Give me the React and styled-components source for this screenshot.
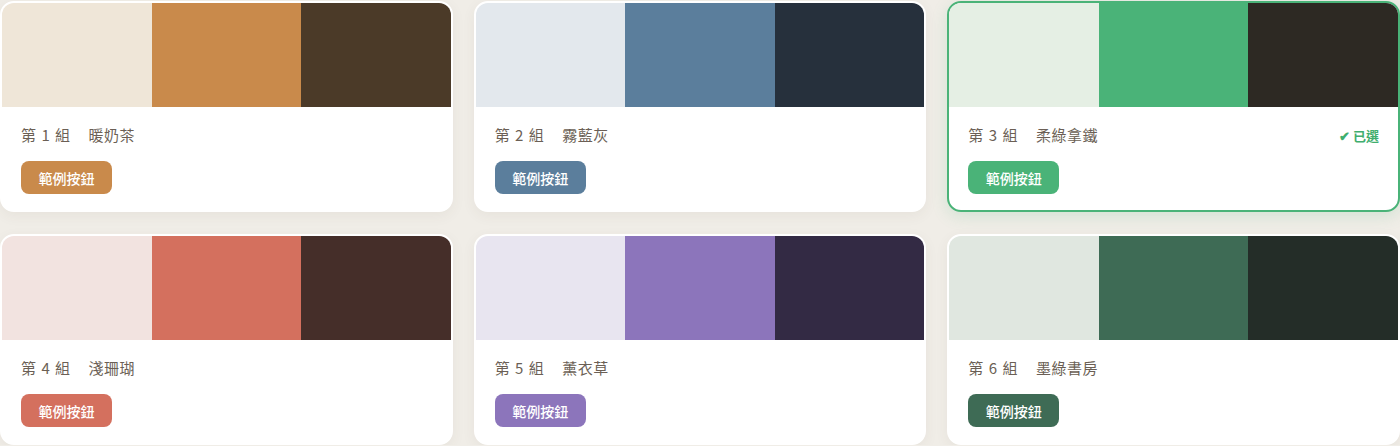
import React from 'react';
import styled, { createGlobalStyle } from 'styled-components';

const GlobalStyle = createGlobalStyle`
  html, body {
    margin: 0;
    padding: 0;
    background: #f0ede7;
  }
  body {
    font-family: "Noto Sans CJK TC", "Noto Sans", sans-serif;
  }
`;

const palettes = [
  { no: 1, name: '暖奶茶', colors: ['#efe6d8', '#c98a4b', '#4b3a28'], accent: '#c98a4b' },
  { no: 2, name: '霧藍灰', colors: ['#e3e8ed', '#5b7e9c', '#26303c'], accent: '#5b7e9c' },
  { no: 3, name: '柔綠拿鐵', colors: ['#e5efe4', '#4ab378', '#2d2923'], accent: '#4ab378', selected: true },
  { no: 4, name: '淺珊瑚', colors: ['#f2e3e0', '#d4705e', '#452e29'], accent: '#d4705e' },
  { no: 5, name: '薰衣草', colors: ['#e8e5f0', '#8c75bb', '#332a44'], accent: '#8c75bb' },
  { no: 6, name: '墨綠書房', colors: ['#e0e7e0', '#3e6b55', '#242d28'], accent: '#3e6b55' },
];

const Grid = styled.div`
  display: grid;
  grid-template-columns: repeat(3, 1fr);
  column-gap: 21px;
  row-gap: 22px;
  width: 1400px;
  padding-top: 1px;
  box-sizing: border-box;
`;

const Card = styled.div`
  background: #fff;
  border: 2px solid ${(p) => (p.$selected ? '#4ab378' : '#ffffff')};
  border-radius: 14px;
  overflow: hidden;
  box-shadow: ${(p) =>
    p.$selected
      ? '0 4px 16px rgba(74, 179, 120, 0.18)'
      : '0 4px 14px rgba(80, 66, 50, 0.06)'};
`;

const Swatches = styled.div`
  display: grid;
  grid-template-columns: repeat(3, 1fr);
  height: 104px;
`;

const Swatch = styled.div`
  background: ${(p) => p.$color};
`;

const Body = styled.div`
  padding: 17px 19px 16px;
`;

const TitleRow = styled.div`
  display: flex;
  align-items: center;
  justify-content: space-between;
  height: 22px;
  margin-bottom: 15px;
`;

const Title = styled.div`
  display: flex;
  gap: 18px;
  font-size: 15px;
  line-height: 22px;
  color: #6b5f55;
  letter-spacing: 0.5px;
  word-spacing: 1px;
`;

const Picked = styled.span`
  font-size: 13px;
  font-weight: 700;
  color: #3fae6e;
`;

const SampleButton = styled.button`
  display: block;
  height: 33px;
  padding: 0 17.5px;
  border: none;
  border-radius: 8px;
  background: ${(p) => p.$color};
  color: #fff;
  font-family: inherit;
  font-size: 14px;
  font-weight: 500;
  cursor: pointer;
`;

const PaletteCard = ({ no, name, colors, accent, selected }) => (
  <Card $selected={selected}>
    <Swatches>
      {colors.map((c) => (
        <Swatch key={c} $color={c} />
      ))}
    </Swatches>
    <Body>
      <TitleRow>
        <Title>
          <span>第 {no} 組</span>
          <span>{name}</span>
        </Title>
        {selected && <Picked>✔ 已選</Picked>}
      </TitleRow>
      <SampleButton $color={accent}>範例按鈕</SampleButton>
    </Body>
  </Card>
);

export default function App() {
  return (
    <>
      <GlobalStyle />
      <Grid>
        {palettes.map((p) => (
          <PaletteCard key={p.no} {...p} />
        ))}
      </Grid>
    </>
  );
}
